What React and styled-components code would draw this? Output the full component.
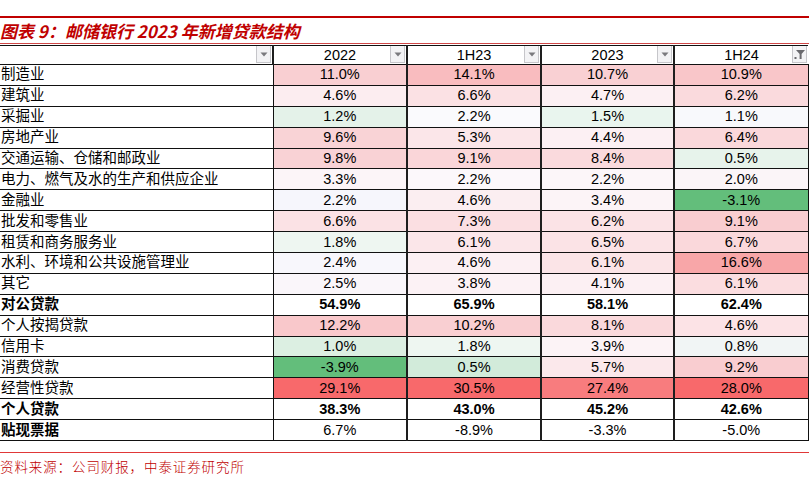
import React from 'react';
import styled, { createGlobalStyle } from 'styled-components';

const GlobalStyle = createGlobalStyle`
    html, body {
        margin: 0;
        padding: 0;
        background: #ffffff;
    }
    body {
        font-family: "Liberation Sans", "Noto Sans CJK SC", sans-serif;
        color: #000;
    }
`;

const Page = styled.div`
    width: 809px;
    height: 485px;
    padding-top: 16px;
    box-sizing: border-box;
    overflow: hidden;
`;

const TopRule = styled.div`
    height: 2px;
    background: #c00000;
`;

const Title = styled.div`
    height: 25px;
    display: flex;
    align-items: center;
    font-family: "Noto Sans CJK SC", sans-serif;
    font-size: 17px;
    font-weight: 700;
    font-style: italic;
    color: #c00000;
    border-bottom: 1px solid #d04848;
    white-space: pre;
`;

const Table = styled.table`
    width: 808px;
    border-collapse: collapse;
    table-layout: fixed;
    margin-top: 1px;
    font-size: 14.5px;
`;

const HeadCell = styled.th`
    position: relative;
    height: 18px;
    padding: 0;
    font-weight: 400;
    text-align: center;
    background: #fff;
    border-top: 1px solid #111;
    border-bottom: 1px solid #111;
    border-left: ${({ $first }) => ($first ? 'none' : '2px solid #1e1e1e')};
    line-height: 18px;
`;

const Row = styled.tr`
    height: 20.9px;
`;

const LabelCell = styled.td`
    padding: 0 0 0 1px;
    text-align: left;
    white-space: nowrap;
    font-weight: ${({ $bold }) => ($bold ? 700 : 400)};
    border-bottom: 1px solid #111;
    line-height: 19px;
`;

const ValueCell = styled.td`
    padding: 0;
    text-align: center;
    background: ${({ $bg }) => $bg || '#fff'};
    font-weight: ${({ $bold }) => ($bold ? 700 : 400)};
    border-bottom: 1px solid #111;
    border-left: ${({ $first }) => ($first ? '1.5px solid #111' : '2px solid #1e1e1e')};
    border-right: ${({ $last }) => ($last ? '1.5px solid #111' : 'none')};
    line-height: 19px;
`;

const DropButton = styled.span`
    position: absolute;
    right: 1px;
    top: 0;
    width: 15px;
    height: 17px;
    box-sizing: border-box;
    background: #f3f3f5;
    border: 1px solid #c6c6ca;
    border-top: none;
    display: flex;
    align-items: center;
    justify-content: center;
`;

const SourceRule = styled.div`
    margin-top: 11px;
    height: 1px;
    background: #e03838;
`;

const Source = styled.div`
    margin-top: 3px;
    font-family: "Noto Sans CJK SC", sans-serif;
    font-size: 13.5px;
    font-weight: 300;
    letter-spacing: 0.9px;
    color: #c00000;
`;

const Arrow = () => (
    <svg width="8" height="5" viewBox="0 0 8 5">
        <path d="M0.5 0.5 H7.5 L4 4.5 Z" fill="#7a7a7e" />
    </svg>
);

const Funnel = () => (
    <svg width="12" height="11" viewBox="0 0 12 11">
        <path d="M2 1 H11 L7.6 5 V10 H5.6 V5 Z" fill="#6a6a6e" />
        <rect x="0.5" y="8" width="2" height="2" fill="#6a6a6e" />
    </svg>
);

const columns = ['2022', '1H23', '2023', '1H24'];

const rows = [
    { label: '制造业', v: ['11.0%', '14.1%', '10.7%', '10.9%'], c: ['#f9cfd2', '#f9bcbf', '#f9d0d3', '#f9c6c9'] },
    { label: '建筑业', v: ['4.6%', '6.6%', '4.7%', '6.2%'], c: ['#fcedf0', '#fbe1e4', '#fcf0f3', '#fadadd'] },
    { label: '采掘业', v: ['1.2%', '2.2%', '1.5%', '1.1%'], c: ['#e4f2e9', '#fafafd', '#e9f5ee', '#f8f9fc'] },
    { label: '房地产业', v: ['9.6%', '5.3%', '4.4%', '6.4%'], c: ['#f9d3d6', '#fbe6e9', '#fcf0f3', '#fad8db'] },
    { label: '交通运输、仓储和邮政业', v: ['9.8%', '9.1%', '8.4%', '0.5%'], c: ['#f9d2d5', '#fad6d9', '#fadadd', '#e7f3eb'] },
    { label: '电力、燃气及水的生产和供应企业', v: ['3.3%', '2.2%', '2.2%', '2.0%'], c: ['#fcf5f8', '#fcf8fb', '#fcf6f9', '#fbf5f8'] },
    { label: '金融业', v: ['2.2%', '4.6%', '3.4%', '-3.1%'], c: ['#f6f6fc', '#fbeef1', '#fcf4f7', '#63be7b'] },
    { label: '批发和零售业', v: ['6.6%', '7.3%', '6.2%', '9.1%'], c: ['#fbe2e5', '#fbdfe2', '#fbe3e6', '#f9cdd0'] },
    { label: '租赁和商务服务业', v: ['1.8%', '6.1%', '6.5%', '6.7%'], c: ['#eef6f1', '#fbe6e9', '#fbe3e6', '#fad8db'] },
    { label: '水利、环境和公共设施管理业', v: ['2.4%', '4.6%', '6.1%', '16.6%'], c: ['#f8f7fc', '#fcf0f3', '#fbe4e7', '#f8a6a8'] },
    { label: '其它', v: ['2.5%', '3.8%', '4.1%', '6.1%'], c: ['#faf6fa', '#fcf2f5', '#fcf0f3', '#fbdde0'] },
    { label: '对公贷款', bold: true, boldValues: true, v: ['54.9%', '65.9%', '58.1%', '62.4%'] },
    { label: '个人按揭贷款', v: ['12.2%', '10.2%', '8.1%', '4.6%'], c: ['#f9c8cb', '#f9cfd2', '#fad9dc', '#fce3e6'] },
    { label: '信用卡', v: ['1.0%', '1.8%', '3.9%', '0.8%'], c: ['#dcefe2', '#eef6f1', '#fcf3f6', '#f1f5f5'] },
    { label: '消费贷款', v: ['-3.9%', '0.5%', '5.7%', '9.2%'], c: ['#63be7b', '#d2ebda', '#fbe8eb', '#f9cdd0'] },
    { label: '经营性贷款', v: ['29.1%', '30.5%', '27.4%', '28.0%'], c: ['#f8696b', '#f8696b', '#f87c7e', '#f8696b'] },
    { label: '个人贷款', bold: true, boldValues: true, v: ['38.3%', '43.0%', '45.2%', '42.6%'] },
    { label: '贴现票据', bold: true, v: ['6.7%', '-8.9%', '-3.3%', '-5.0%'] },
];

const App = () => {
    return (
        <Page>
            <GlobalStyle />
            <TopRule />
            <Title>图表 9：邮储银行 2023 年新增贷款结构</Title>
            <Table>
                <colgroup>
                    <col style={{ width: 273 }} />
                    <col style={{ width: 134 }} />
                    <col style={{ width: 134 }} />
                    <col style={{ width: 133 }} />
                    <col style={{ width: 134 }} />
                </colgroup>
                <thead>
                    <tr>
                        <HeadCell $first>
                            <DropButton><Arrow /></DropButton>
                        </HeadCell>
                        {columns.map((col, i) => (
                            <HeadCell key={col}>
                                {col}
                                <DropButton>{i === 3 ? <Funnel /> : <Arrow />}</DropButton>
                            </HeadCell>
                        ))}
                    </tr>
                </thead>
                <tbody>
                    {rows.map((row) => (
                        <Row key={row.label}>
                            <LabelCell $bold={row.bold}>{row.label}</LabelCell>
                            {row.v.map((val, i) => (
                                <ValueCell
                                    key={i}
                                    $first={i === 0}
                                    $last={i === 3}
                                    $bold={row.boldValues}
                                    $bg={row.c ? row.c[i] : null}
                                >
                                    {val}
                                </ValueCell>
                            ))}
                        </Row>
                    ))}
                </tbody>
            </Table>
            <SourceRule />
            <Source>资料来源：公司财报，中泰证券研究所</Source>
        </Page>
    );
};

export default App;
